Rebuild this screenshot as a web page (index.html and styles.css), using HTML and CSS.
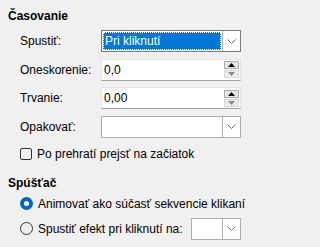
FILE: index.html
```html
<!DOCTYPE html>
<html>
<head>
<meta charset="utf-8">
<link rel="stylesheet" href="styles.css">
</head>
<body>
<div class="panel">
  <div class="title">Časovanie</div>
  <div class="grid">
    <div class="label">Spustiť:</div>
    <div class="combo focused">
      <div class="combo-value"><span class="focus-rect">Pri kliknutí</span></div>
      <div class="combo-btn"><svg width="9" height="5" viewBox="0 0 9 5"><path d="M0.5 0.5 L4.5 4.5 L8.5 0.5" fill="none" stroke="#6d6d6d" stroke-width="1"/></svg></div>
    </div>

    <div class="label">Oneskorenie:</div>
    <div class="spin">
      <div class="spin-value">0,0</div>
      <div class="spin-btns">
        <div class="spin-up"><svg width="7" height="4" viewBox="0 0 7 4"><path d="M0 4 L3.5 0 L7 4 Z" fill="#000"/></svg></div>
        <div class="spin-down"><svg width="7" height="4" viewBox="0 0 7 4"><path d="M0 0 L3.5 4 L7 0 Z" fill="#8a8a8a"/></svg></div>
      </div>
    </div>

    <div class="label">Trvanie:</div>
    <div class="spin">
      <div class="spin-value">0,00</div>
      <div class="spin-btns">
        <div class="spin-up"><svg width="7" height="4" viewBox="0 0 7 4"><path d="M0 4 L3.5 0 L7 4 Z" fill="#000"/></svg></div>
        <div class="spin-down"><svg width="7" height="4" viewBox="0 0 7 4"><path d="M0 0 L3.5 4 L7 0 Z" fill="#8a8a8a"/></svg></div>
      </div>
    </div>

    <div class="label">Opakovať:</div>
    <div class="combo">
      <div class="combo-value"></div>
      <div class="combo-btn"><svg width="9" height="5" viewBox="0 0 9 5"><path d="M0.5 0.5 L4.5 4.5 L8.5 0.5" fill="none" stroke="#6d6d6d" stroke-width="1"/></svg></div>
    </div>
  </div>

  <div class="check-row">
    <span class="checkbox"></span>
    <span>Po prehratí prejsť na začiatok</span>
  </div>

  <div class="title title2">Spúšťač</div>

  <div class="radio-row first">
    <span class="radio checked"></span>
    <span>Animovať ako súčasť sekvencie klikaní</span>
  </div>
  <div class="radio-row second">
    <span class="radio"></span>
    <span class="grow">Spustiť efekt pri kliknutí na:</span>
    <div class="combo small">
      <div class="combo-value"></div>
      <div class="combo-btn"><svg width="9" height="5" viewBox="0 0 9 5"><path d="M0.5 0.5 L4.5 4.5 L8.5 0.5" fill="none" stroke="#6d6d6d" stroke-width="1"/></svg></div>
    </div>
  </div>
</div>
</body>
</html>
```

FILE: styles.css
```css
html, body {
  margin: 0;
  padding: 0;
  background: #f0f0f0;
}
body {
  font-family: "Liberation Sans", Arial, sans-serif;
  font-size: 12px;
  color: #000;
  width: 250px;
  height: 247px;
  overflow: hidden;
  white-space: nowrap;
}
.panel {
  padding: 8px 9px 0 8px;
}
.title {
  font-weight: bold;
  line-height: 16px;
  height: 16px;
}
.grid {
  margin-top: 6px;
  padding-left: 12px;
  display: grid;
  grid-template-columns: 81px 140px;
  grid-auto-rows: 22px;
  row-gap: 6.5px;
  align-items: center;
}
.label {
  line-height: 22px;
}
.combo {
  height: 22px;
  box-sizing: border-box;
  border: 1px solid #adadad;
  background: #fff;
  display: flex;
}
.combo.focused {
  border-color: #7a7a7a;
}
.combo-value {
  flex: 1;
  padding: 1px;
  display: flex;
}
.focus-rect {
  flex: 1;
  background: #0078d7;
  color: #fff;
  border: 1px dotted #000;
  outline: 1px dotted #fff;
  outline-offset: -1px;
  line-height: 16px;
  padding-left: 1px;
}
.combo-btn {
  width: 17px;
  border-left: 1px solid #adadad;
  display: flex;
  align-items: center;
  justify-content: center;
}
.spin {
  height: 22px;
  box-sizing: border-box;
  background: #fff;
  border: 1px solid #e3e3e3;
  border-bottom-color: #a0a0a0;
  display: flex;
  align-items: center;
}
.spin-value {
  flex: 1;
  padding-left: 2px;
  line-height: 20px;
}
.spin-btns {
  display: flex;
  flex-direction: column;
  gap: 1px;
  margin-right: 1px;
}
.spin-up, .spin-down {
  width: 15px;
  height: 8px;
  box-sizing: border-box;
  display: flex;
  align-items: center;
  justify-content: center;
}
.spin-up {
  background: #e5e5e5;
  border: 1px solid #adadad;
}
.spin-down {
  background: #ececec;
  border: 1px solid #d6d6d6;
}
.check-row, .radio-row {
  display: flex;
  align-items: center;
  padding-left: 12px;
  gap: 5px;
  height: 22px;
}
.check-row {
  margin-top: 5px;
}
.checkbox {
  width: 12px;
  height: 12px;
  box-sizing: border-box;
  border: 1px solid #333;
  border-radius: 2px;
  background: #f0f0f0;
  flex: none;
}
.title2 {
  margin-top: 10px;
}
.radio-row.first {
  margin-top: 2px;
}
.radio-row.second {
  margin-top: 3px;
}
.radio {
  width: 13px;
  height: 13px;
  box-sizing: border-box;
  border: 1px solid #333;
  border-radius: 50%;
  background: #f0f0f0;
  flex: none;
}
.radio.checked {
  border: 4px solid #0067c0;
  background: #fff;
}
.grow {
  flex: 1;
}
.combo.small {
  width: 50px;
  flex: none;
}
```
